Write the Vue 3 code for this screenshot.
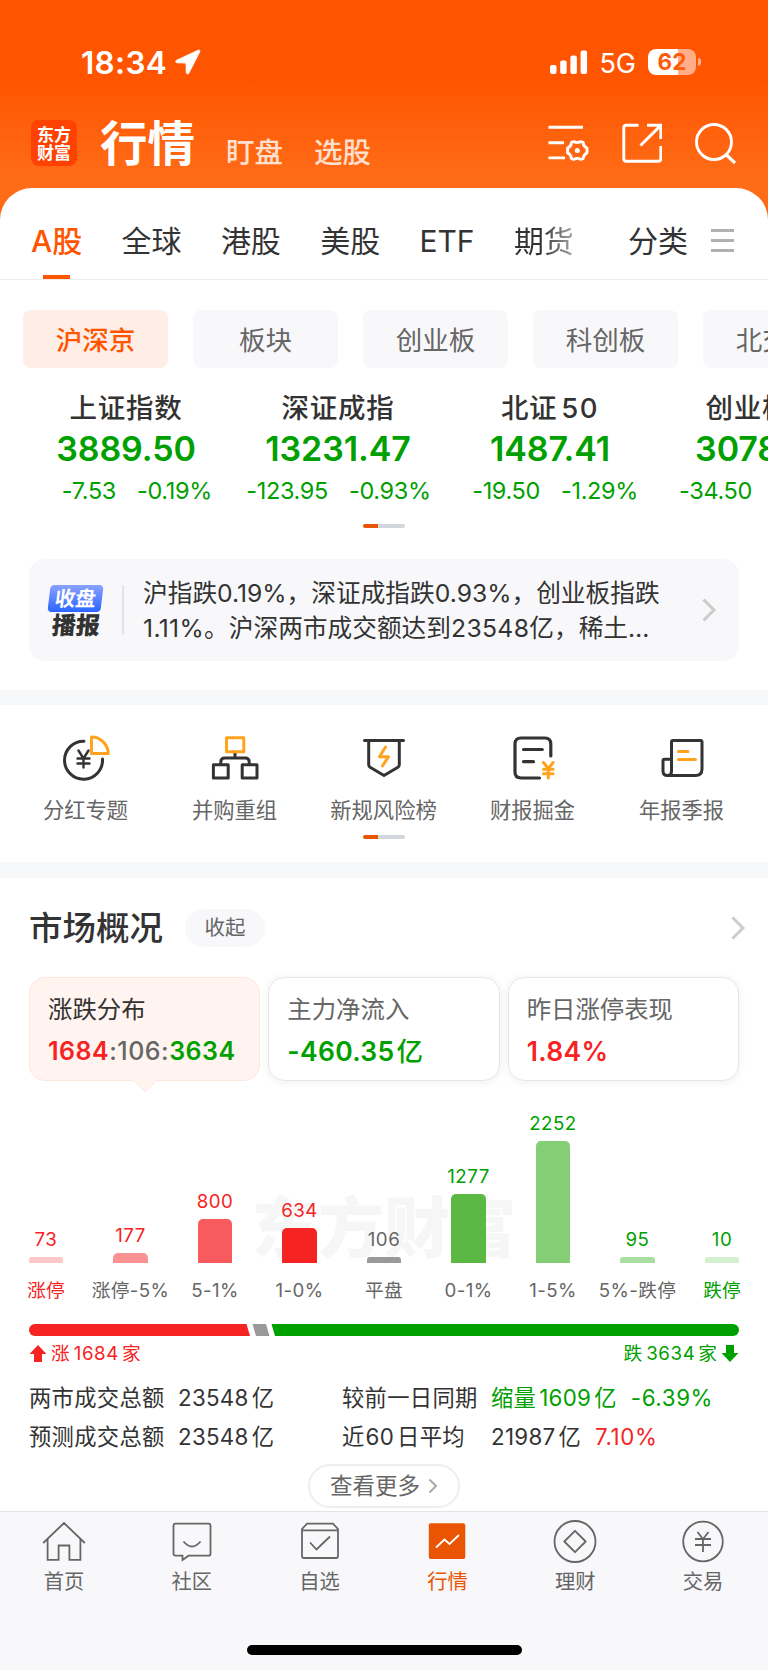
<template>
  <div class="page">
    <header class="header">
      <div class="status">
        <div class="status__left">
          <span class="status__time">18:34</span>
          <svg class="status__arrow" width="26" height="26" viewBox="0 0 26 26"><path d="M23.2 1.2 1.6 11.2c-1.6.8-1.2 2.5.4 2.6l9 .3.2 9.3c.1 1.7 2 2.1 2.8.5L24.8 2.8c.6-1.2-.4-2.2-1.6-1.6Z" fill="#fff" stroke="#fff" stroke-width=".8" /></svg>
        </div>
        <div class="status__right">
          <svg width="38" height="24" viewBox="0 0 38 24" fill="#fff">
            <rect x="0" y="15" width="6.500" height="9" rx="2" />
            <rect x="10.200" y="10.500" width="6.500" height="13.500" rx="2" />
            <rect x="20.400" y="5.500" width="6.500" height="18.500" rx="2" />
            <rect x="30.600" y="0.500" width="6.500" height="23.500" rx="2" />
          </svg>
          <span class="status__net">5G</span>
          <div class="battery"><span>62</span></div>
          <i class="battery-tip"></i>
        </div>
      </div>
      <div class="nav">
        <div class="logo"><span>东方</span><span>财富</span></div>
        <h1 class="nav__title">行情</h1>
        <span class="nav__link">盯盘</span>
        <span class="nav__link">选股</span>
        <div class="nav__icons">
          <svg width="42" height="40" viewBox="0 0 42 40" fill="none" stroke="#fff" stroke-width="2.900">
            <path d="M.5 4.200H35M.5 19.700H16M.5 34.900H17" />
            <path d="M26 18.300q3.500 2 7 0l2.300.8q.3 4 3.900 5.600v5q-3.600 1.500-3.900 5.600l-2.300.8q-3.500-2-7 0l-2.300-.8q-.3-4.100-3.900-5.600v-5q3.600-1.600 3.900-5.600Z" transform="translate(-.2 .3)" stroke-linejoin="round" />
            <circle cx="29.300" cy="27.500" r="2.500" fill="#fff" stroke="none" />
          </svg>
          <svg width="40" height="40" viewBox="0 0 40 40" fill="none" stroke="#fff" stroke-width="2.900">
            <path d="M16.500 2.300H4.300a2.500 2.500 0 0 0-2.500 2.500v31a2.500 2.500 0 0 0 2.500 2.500h32a2.500 2.500 0 0 0 2.500-2.500V23M25 2.300h13.800V16M38 3.100 18.500 22.500" />
          </svg>
          <svg width="42" height="42" viewBox="0 0 42 42" fill="none" stroke="#fff" stroke-width="2.900">
            <circle cx="20" cy="20" r="17.500" />
            <path d="M32 32.500 41 41" stroke-width="3.200" />
          </svg>
        </div>
      </div>
    </header>

    <main class="panel">
      <nav class="tabs">
        <span v-for="t in tabs" :key="t" class="tabs__item" :class="{ 'is-active': t === 'A股', 'is-fading': t === '期货' }">{{ t }}</span>
        <span class="tabs__item tabs__all">分类</span>
        <i class="tabs__menu"></i>
      </nav>

      <div class="pills">
        <span v-for="(p, i) in pills" :key="p" class="pill" :class="{ 'is-active': i === 0 }">{{ p }}</span>
      </div>

      <div class="indices">
        <div v-for="x in indices" :key="x.name" class="index">
          <div class="index__name">{{ x.name }}<span v-if="x.num" class="index__num">{{ x.num }}</span></div>
          <div class="index__value">{{ x.value }}</div>
          <div class="index__change"><span>{{ x.diff }}</span><span>{{ x.rate }}</span></div>
        </div>
      </div>
      <div class="pager"></div>

      <div class="news">
        <div class="news__badge"><span class="news__top">收盘</span><span class="news__bottom">播报</span></div>
        <i class="news__line"></i>
        <p class="news__text">
          <span>沪指跌<b>0.19%</b>，深证成指跌<b>0.93%</b>，创业板指跌</span>
          <span class="news__second"><b>1.11%</b>。沪深两市成交额达到<b>23548</b>亿，稀土<b>…</b></span>
        </p>
        <svg class="chevron" width="16" height="26" viewBox="0 0 16 26"><path d="M2.500 2.500 13 13 2.500 23.500" /></svg>
      </div>

      <section class="shortcuts">
        <div class="shortcuts__row">
          <div class="shortcut">
            <svg viewBox="0 0 48 48">
              <path d="M22 7.200A19 19 0 1 0 40.500 25" />
              <path d="m16.500 16.500 5 8 5-8M21.500 24.500v9M15.500 24.500h12M15.500 29.500h12" stroke-width="2.400" />
              <path class="gold" d="M29.500 3v16.500H46.300C46 10.500 38.500 3 29.500 3Z" />
            </svg>
            <span>分红专题</span>
          </div>
          <div class="shortcut">
            <svg viewBox="0 0 48 48">
              <path d="M24 18v6M9.800 30v-2q0-4 4-4h20.400q4 0 4 4v2M2.400 30.700h14.800v13.400H2.400ZM31.200 30.700H46v13.400H31.200Z" />
              <path class="gold" d="M15.500 3.800h17.300v14H15.500Z" />
            </svg>
            <span>并购重组</span>
          </div>
          <div class="shortcut">
            <svg viewBox="0 0 48 48">
              <path d="M4.500 6.500h39M8.700 6.500v24.300q0 1.600 1.400 2.400L24 41.500l13.900-8.300q1.400-.8 1.400-2.400V6.500" />
              <path class="gold" d="m25.500 13-6 9.700h9L22.500 32" />
            </svg>
            <span>新规风险榜</span>
          </div>
          <div class="shortcut">
            <svg viewBox="0 0 48 48">
              <path d="M41.800 22V10q0-6-6-6H12q-6 0-6 6v28q0 6 6 6h18.500M14.500 15.500h18.800M14.500 27.700h10" stroke-width="3.200" />
              <path class="gold" d="m34.500 28.500 4.800 6 4.800-6M39.300 34.500V44M34.500 35.200h9.600M34.500 39.800h9.600" />
            </svg>
            <span>财报掘金</span>
          </div>
          <div class="shortcut">
            <svg viewBox="0 0 48 48">
              <path d="M13.500 37V8q0-1.500 1.500-1.500h27.500q1.500 0 1.500 1.500v27q0 6.500-6.500 6.500H9.500q-4.500 0-4.500-4.500V26.800q0-1.500 1.500-1.500h7M13.500 37q0 4.500-4 4.500" />
              <path class="gold" d="M20.500 17.500h9.500M20.500 25.500h17" />
            </svg>
            <span>年报季报</span>
          </div>
        </div>
        <div class="pager"></div>
      </section>

      <section class="market">
        <div class="market__head">
          <h2>市场概况</h2>
          <span class="market__fold">收起</span>
          <svg class="chevron" width="16" height="26" viewBox="0 0 16 26"><path d="M2.500 2.500 13 13 2.500 23.500" /></svg>
        </div>

        <div class="cards">
          <div class="card is-active">
            <span class="card__label">涨跌分布</span>
            <span class="card__value card__value--wide"><em class="up">1684</em><em class="flat">:106:</em><em class="down">3634</em></span>
          </div>
          <div class="card">
            <span class="card__label">主力净流入</span>
            <span class="card__value down">-460.35<em class="cjk">亿</em></span>
          </div>
          <div class="card">
            <span class="card__label">昨日涨停表现</span>
            <span class="card__value up">1.84%</span>
          </div>
        </div>

        <div class="chart">
          <div class="watermark">东方财富</div>
          <div v-for="b in bars" :key="b.label" class="bar" :class="b.tone">
            <span class="bar__count">{{ b.count }}</span>
            <i class="bar__fill" :class="{ 'is-short': b.height < 8 }" :style="{ height: `${b.height}px`, background: b.color }"></i>
            <span class="bar__label">{{ b.label }}</span>
          </div>
        </div>

        <svg class="ratio" width="710" height="12" viewBox="0 0 710 12">
          <path d="M6 0h211.500l3.500 12H6A6 6 0 0 1 6 0Z" fill="#f62323" />
          <path d="M223.500 0h13.500l3.500 12H227Z" fill="#999" />
          <path d="M242.500 0H704a6 6 0 0 1 0 12H246Z" fill="#00a000" />
        </svg>
        <div class="legend">
          <span class="up"><svg width="18" height="17" viewBox="0 0 18 17"><path d="M9 0 17.500 9H13v8H5V9H.5Z" /></svg>涨<b>1684</b>家</span>
          <span class="down">跌<b>3634</b>家<svg width="18" height="17" viewBox="0 0 18 17"><path d="M9 17 17.500 8H13V0H5v8H.5Z" /></svg></span>
        </div>

        <div class="stats">
          <span>两市成交总额</span><span><b>23548</b>亿</span>
          <span>较前一日同期</span><span class="down">缩量<b class="stats__delta">1609</b>亿<b class="stats__rate">-6.39%</b></span>
          <span>预测成交总额</span><span><b>23548</b>亿</span>
          <span>近<b class="stats__days">60</b>日平均</span><span><b>21987</b>亿<b class="stats__rate up">7.10%</b></span>
        </div>

        <div class="more">查看更多<svg width="10" height="16" viewBox="0 0 10 16"><path d="M1.500 1.500 8 8l-6.500 6.500" /></svg></div>
      </section>
    </main>

    <footer class="tabbar">
      <div class="tabbar__row">
        <div class="tabbar__item">
          <svg viewBox="0 0 44 44"><path d="M1.200 23 22 3l20.800 20M5.600 19v20.800h11V25.500h10.800v14.300h11V19" /></svg>
          <span>首页</span>
        </div>
        <div class="tabbar__item">
          <svg viewBox="0 0 44 44"><path d="M5.500 3.700h33q2 0 2 2v28q0 2-2 2H18.500L12.500 40v-4.300h-7q-2 0-2-2v-28q0-2 2-2ZM13.500 21.500q8.500 10 17 0" /></svg>
          <span>社区</span>
        </div>
        <div class="tabbar__item">
          <svg viewBox="0 0 44 44"><path d="M4 10.300h36M4 9l5-5.300h26L40 9v27q0 2-2 2H6q-2 0-2-2ZM12 22.500l6.500 7L32 16.500" /></svg>
          <span>自选</span>
        </div>
        <div class="tabbar__item is-active">
          <svg viewBox="0 0 44 44"><rect x="3.800" y="3.200" width="36.500" height="35.800" rx="2" fill="#ea5504" stroke="none" /><path d="m11 27.500 8.500-8 5 4.500L34 15" stroke="#fff" /></svg>
          <span>行情</span>
        </div>
        <div class="tabbar__item">
          <svg viewBox="0 0 44 44"><circle cx="22" cy="21.500" r="20.500" /><path d="m22 10.800 10.700 10.700L22 32.200 11.300 21.500Z" stroke-linejoin="round" /></svg>
          <span>理财</span>
        </div>
        <div class="tabbar__item">
          <svg viewBox="0 0 44 44"><circle cx="22" cy="21.500" r="19.800" /><path d="m16.500 12 5.500 7 5.500-7M22 19v13M14 19h16M14 25h16" /></svg>
          <span>交易</span>
        </div>
      </div>
      <i class="home-bar"></i>
    </footer>
  </div>
</template>

<script setup>
import { ref } from "vue";

const tabs = ref(["A股", "全球", "港股", "美股", "ETF", "期货"]);
const pills = ref(["沪深京", "板块", "创业板", "科创板", "北交所"]);
const indices = ref([
  { name: "上证指数", value: "3889.50", diff: "-7.53", rate: "-0.19%" },
  { name: "深证成指", value: "13231.47", diff: "-123.95", rate: "-0.93%" },
  { name: "北证", num: "50", value: "1487.41", diff: "-19.50", rate: "-1.29%" },
  { name: "创业板指", value: "3078.76", diff: "-34.50", rate: "-1.11%" },
]);
const bars = ref([
  { label: "涨停", count: 73, height: 6, color: "#fdc8c8", tone: "up is-limit" },
  { label: "涨停-5%", count: 177, height: 10, color: "#fa9293", tone: "up" },
  { label: "5-1%", count: 800, height: 44, color: "#f85b5d", tone: "up" },
  { label: "1-0%", count: 634, height: 35, color: "#f62323", tone: "up" },
  { label: "平盘", count: 106, height: 6, color: "#999", tone: "flat" },
  { label: "0-1%", count: 1277, height: 69.5, color: "#5bb843", tone: "down" },
  { label: "1-5%", count: 2252, height: 122.5, color: "#85ce75", tone: "down" },
  { label: "5%-跌停", count: 95, height: 6, color: "#aadda0", tone: "down" },
  { label: "跌停", count: 10, height: 6, color: "#d5f0d0", tone: "down is-limit" },
]);
</script>

<style>
body {
  background: #fff;
}
</style>

<style scoped>
.page {
  width: 768px;
  height: 1670px;
  overflow: hidden;
  display: flex;
  flex-direction: column;
  background: #ff6c18;
  color: #333;
  font-family: Inter, "Noto Sans CJK SC", sans-serif;
  white-space: nowrap;
}
.page * {
  box-sizing: border-box;
}
svg {
  display: block;
  flex: none;
}
b,
em,
i {
  font-style: normal;
  font-weight: inherit;
}
.up {
  color: #f62323;
}
.down {
  color: #00a000;
}
.flat {
  color: #666;
}

/* header */
.header {
  height: 220px;
  flex: none;
  background: linear-gradient(#ff5500 0, #ff5500 80px, #ff6c18 180px, #ff6c18 220px);
  color: #fff;
}
.status {
  height: 100px;
  padding: 24px 67px 0 81px;
  display: flex;
  justify-content: space-between;
  align-items: center;
}
.status__left,
.status__right {
  display: flex;
  align-items: center;
}
.status__time {
  font-size: 31.500px;
  font-weight: 600;
  letter-spacing: 0.3px;
}
.status__arrow {
  margin-left: 8px;
}
.status__net {
  margin: 3px 12px 0 11px;
  font-size: 27px;
  line-height: 30px;
}
.battery {
  width: 48px;
  height: 26px;
  border-radius: 8px;
  background: linear-gradient(90deg, #fff 62%, #ffae87 62%);
  color: #ff5a08;
  font-size: 22.500px;
  font-weight: 700;
  line-height: 26px;
  text-align: center;
}
.battery-tip {
  width: 3px;
  height: 8px;
  margin-left: 2px;
  border-radius: 0 4px 4px 0;
  background: #ffae87;
}
.nav {
  height: 86px;
  padding: 0 32px 0 31px;
  display: flex;
  align-items: center;
}
.logo {
  width: 46px;
  height: 46px;
  border-radius: 8px;
  background: #ff4102;
  display: flex;
  flex-direction: column;
  align-items: center;
  justify-content: center;
  font: 700 17px/18px "Noto Sans CJK SC", sans-serif;
}
.nav__title {
  margin: 2px 0 0 23px;
  font-size: 47.500px;
  line-height: 60px;
  font-weight: 700;
}
.nav__link {
  margin: 20px 0 0 31px;
  font-size: 28.500px;
  line-height: 40px;
  font-weight: 500;
  color: #ffe0cf;
}
.nav__icons {
  margin-left: auto;
  display: flex;
  align-items: center;
  gap: 32px;
}

/* tabs */
.panel {
  flex: none;
  height: 1323px;
  margin-top: -32px;
  border-radius: 32px 32px 0 0;
  background: #fff;
}
.tabs {
  height: 92px;
  padding: 0 34px 0 31px;
  border-bottom: 1.5px solid #ebebeb;
  display: flex;
  align-items: center;
  font-size: 30px;
}
.tabs__item {
  margin-right: 39.300px;
  padding-top: 14px;
  height: 92px;
  line-height: 78px;
}
.tabs__item.is-active {
  color: #ff5500;
  font-weight: 500;
  background: linear-gradient(#ff5500, #ff5500) 50% 87px / 27px 4px no-repeat;
}
.tabs__item.is-fading {
  color: transparent;
  background: linear-gradient(90deg, #333 45%, #aaa);
  background-clip: text;
}
.tabs__all {
  margin: 0 23px 0 auto;
}
.tabs__menu {
  width: 23px;
  height: 23px;
  margin-top: 13px;
  background: linear-gradient(#b0b0b0 3px, transparent 3px 10px, #b0b0b0 10px 13px, transparent 13px 20px, #b0b0b0 20px);
}

/* pills */
.pills {
  margin-top: 30px;
  padding-left: 23px;
  display: flex;
  gap: 25px;
  overflow: hidden;
}
.pill {
  flex: none;
  width: 145px;
  height: 58px;
  border-radius: 8px;
  background: #f8f8fa;
  color: #666;
  font-size: 26.500px;
  line-height: 60px;
  text-align: center;
}
.pill.is-active {
  background: #ffeee6;
  color: #ff5500;
  font-weight: 500;
}

/* index quotes */
.indices {
  margin-top: 20px;
  padding-left: 20px;
  height: 136px;
  display: flex;
  overflow: hidden;
}
.index {
  flex: none;
  width: 212px;
  text-align: center;
}
.index__name {
  font-size: 27.500px;
  font-weight: 500;
  line-height: 40px;
  letter-spacing: 0.7px;
}
.index__num {
  margin-left: 4px;
  letter-spacing: 1.500px;
}
.index__value {
  color: #00a000;
  font-size: 34px;
  font-weight: 600;
  line-height: 41px;
  letter-spacing: -0.1px;
}
.index__change {
  color: #00a000;
  font-size: 23.500px;
  line-height: 43px;
  letter-spacing: -0.35px;
  display: grid;
  grid-template-columns: 96px 1fr;
  gap: 21px;
  text-align: left;
}
.index__change span:first-child {
  justify-self: end;
}
.pager {
  width: 42px;
  height: 4px;
  margin: 0 auto;
  border-radius: 2px;
  background: linear-gradient(90deg, #ea5504 15px, #d3d6dc 15px);
}

/* closing news */
.news {
  height: 102px;
  margin: 31px 29px 0;
  padding: 0 22px 0 19px;
  border-radius: 16px;
  background: #f8f8fa;
  display: flex;
  align-items: center;
}
.news__badge {
  width: 55px;
  padding-top: 3px;
  display: flex;
  flex-direction: column;
  align-items: center;
}
.news__top {
  width: 53px;
  height: 27px;
  border-radius: 4px;
  background: linear-gradient(#8aa2ff, #2b65ff);
  color: #fff;
  font-size: 20.500px;
  font-weight: 700;
  line-height: 27px;
  text-align: center;
  transform: skewX(-7deg);
}
.news__bottom {
  font-size: 24px;
  font-weight: 900;
  line-height: 27px;
  transform: skewX(-5deg);
}
.news__line {
  width: 2px;
  height: 50px;
  margin: 0 19px;
  background: #e3e3e6;
}
.news__text {
  margin: 0;
  padding-top: 1px;
  font-size: 24.700px;
  line-height: 35px;
}
.news__text span {
  display: block;
}
.news__second b {
  letter-spacing: 0.35px;
}
.chevron {
  margin-left: auto;
  fill: none;
  stroke: #ccc;
  stroke-width: 3;
}

/* shortcuts */
.shortcuts {
  height: 188px;
  margin-top: 29px;
  border: solid #f7f8fa;
  border-width: 15px 0 16px;
  padding-top: 29px;
}
.shortcuts__row {
  padding: 0 12px 0 11px;
  display: grid;
  grid-template-columns: repeat(5, 149px);
}
.shortcut {
  display: flex;
  flex-direction: column;
  align-items: center;
  color: #666;
  font-size: 21.300px;
  line-height: 30px;
}
.shortcut svg {
  width: 48px;
  height: 48px;
  margin-bottom: 13px;
  fill: none;
  stroke: #333;
  stroke-width: 3;
  stroke-linejoin: round;
  stroke-linecap: round;
}
.shortcut .gold {
  stroke: #ffa31f;
}
.shortcuts .pager {
  margin-top: 10px;
}

/* market overview */
.market {
  padding: 30px 29px 0;
}
.market__head {
  height: 40px;
  margin-right: -7px;
  display: flex;
  align-items: center;
}
.market__head h2 {
  margin: 0 22px 0 0;
  font-size: 33.500px;
  font-weight: 500;
  line-height: 40px;
}
.market__fold {
  width: 80px;
  height: 38px;
  border-radius: 19px;
  background: #f8f8fa;
  color: #666;
  font-size: 20.500px;
  line-height: 38px;
  text-align: center;
}
.cards {
  margin-top: 29px;
  display: grid;
  grid-template-columns: repeat(3, 1fr);
  gap: 8px;
}
.card {
  height: 104px;
  padding: 13px 18px;
  border: 1px solid #e6e6e6;
  border-radius: 16px;
  box-shadow: 0 1px 9px rgba(0, 0, 0, 0.07);
  color: #666;
  display: flex;
  flex-direction: column;
}
.card.is-active {
  position: relative;
  border-color: #ffe6dc;
  background: #fff4ef;
  box-shadow: none;
  color: #333;
}
.card.is-active::after {
  content: "";
  position: absolute;
  left: 50%;
  bottom: -9px;
  width: 18px;
  height: 18px;
  border: solid #ffe6dc;
  border-width: 0 1px 1px 0;
  border-radius: 0 0 3px 0;
  background: #fff4ef;
  clip-path: polygon(100% 0, 100% 100%, 0 100%);
  transform: translateX(-50%) rotate(45deg);
}
.card__label {
  font-size: 24.400px;
  line-height: 36px;
}
.card__value {
  margin-top: 6px;
  font-size: 26.500px;
  font-weight: 600;
  line-height: 36px;
  letter-spacing: 0.3px;
}
.card__value--wide {
  font-size: 25px;
  letter-spacing: 0.5px;
}
.card__value .flat {
  font-weight: 500;
}
.cjk {
  margin-left: 2px;
  font-weight: 500;
}

/* distribution chart */
.chart {
  position: relative;
  height: 220px;
  margin: 0 -25px;
  display: grid;
  grid-template-columns: repeat(9, 84.500px);
  justify-content: center;
  align-items: end;
}
.watermark {
  position: absolute;
  left: 248px;
  top: 107px;
  color: #f6f6f6;
  font-size: 66px;
  font-weight: 900;
  line-height: 80px;
}
.bar {
  position: relative;
  display: flex;
  flex-direction: column;
  align-items: center;
  font-size: 18.700px;
  letter-spacing: 0.5px;
}
.bar__count {
  margin-bottom: 5px;
  line-height: 24px;
}
.bar__fill {
  width: 34.500px;
  border-radius: 5px 5px 0 0;
}
.bar__fill.is-short {
  border-radius: 3px 3px 0 0;
}
.bar__label {
  margin-top: 13px;
  height: 25px;
  line-height: 30px;
  color: #666;
  letter-spacing: 0.4px;
}
.is-limit .bar__label {
  color: inherit;
  letter-spacing: 0;
}

/* rise / fall split */
.ratio {
  margin-top: 23px;
}
.legend {
  height: 34px;
  padding-top: 1px;
  display: flex;
  justify-content: space-between;
  font-size: 18.700px;
  line-height: 34px;
}
.legend span {
  display: flex;
  align-items: center;
  gap: 4px;
}
.legend svg {
  fill: currentColor;
}
.legend b {
  margin-right: -1px;
  letter-spacing: 0.6px;
}

/* turnover */
.stats {
  margin-top: 9px;
  display: grid;
  grid-template-columns: 149px 164px 149px auto;
  font-size: 22.300px;
  line-height: 38.500px;
  letter-spacing: 0.3px;
}
.stats b {
  margin-right: 3px;
}
.stats .stats__delta {
  margin-left: 3px;
}
.stats .stats__days {
  margin-left: 1px;
}
.stats .stats__rate {
  margin-left: 14px;
  letter-spacing: 0.6px;
}
.more {
  width: 152px;
  height: 44px;
  margin: 8px auto 0;
  border: 2px solid #eee;
  border-radius: 22px;
  display: flex;
  align-items: center;
  justify-content: center;
  gap: 8px;
  color: #666;
  font-size: 22.500px;
  line-height: 38px;
}
.more svg {
  fill: none;
  stroke: #aaa;
  stroke-width: 2;
}

/* bottom bar */
.tabbar {
  flex: 1;
  border-top: 1px solid #e2e3e6;
  background: #f8f8fa;
}
.tabbar__row {
  padding: 8px 1px 0 0;
  display: grid;
  grid-template-columns: repeat(6, 1fr);
}
.tabbar__item {
  display: flex;
  flex-direction: column;
  align-items: center;
  color: #666;
  font-size: 20.300px;
  line-height: 30px;
}
.tabbar__item svg {
  width: 44px;
  height: 44px;
  margin-bottom: 3px;
  fill: none;
  stroke: #666;
  stroke-width: 1.800;
}
.tabbar__item.is-active {
  color: #ea5504;
}
.home-bar {
  display: block;
  width: 275px;
  height: 10px;
  margin: 48px auto 0;
  border-radius: 5px;
  background: #000;
}
</style>
